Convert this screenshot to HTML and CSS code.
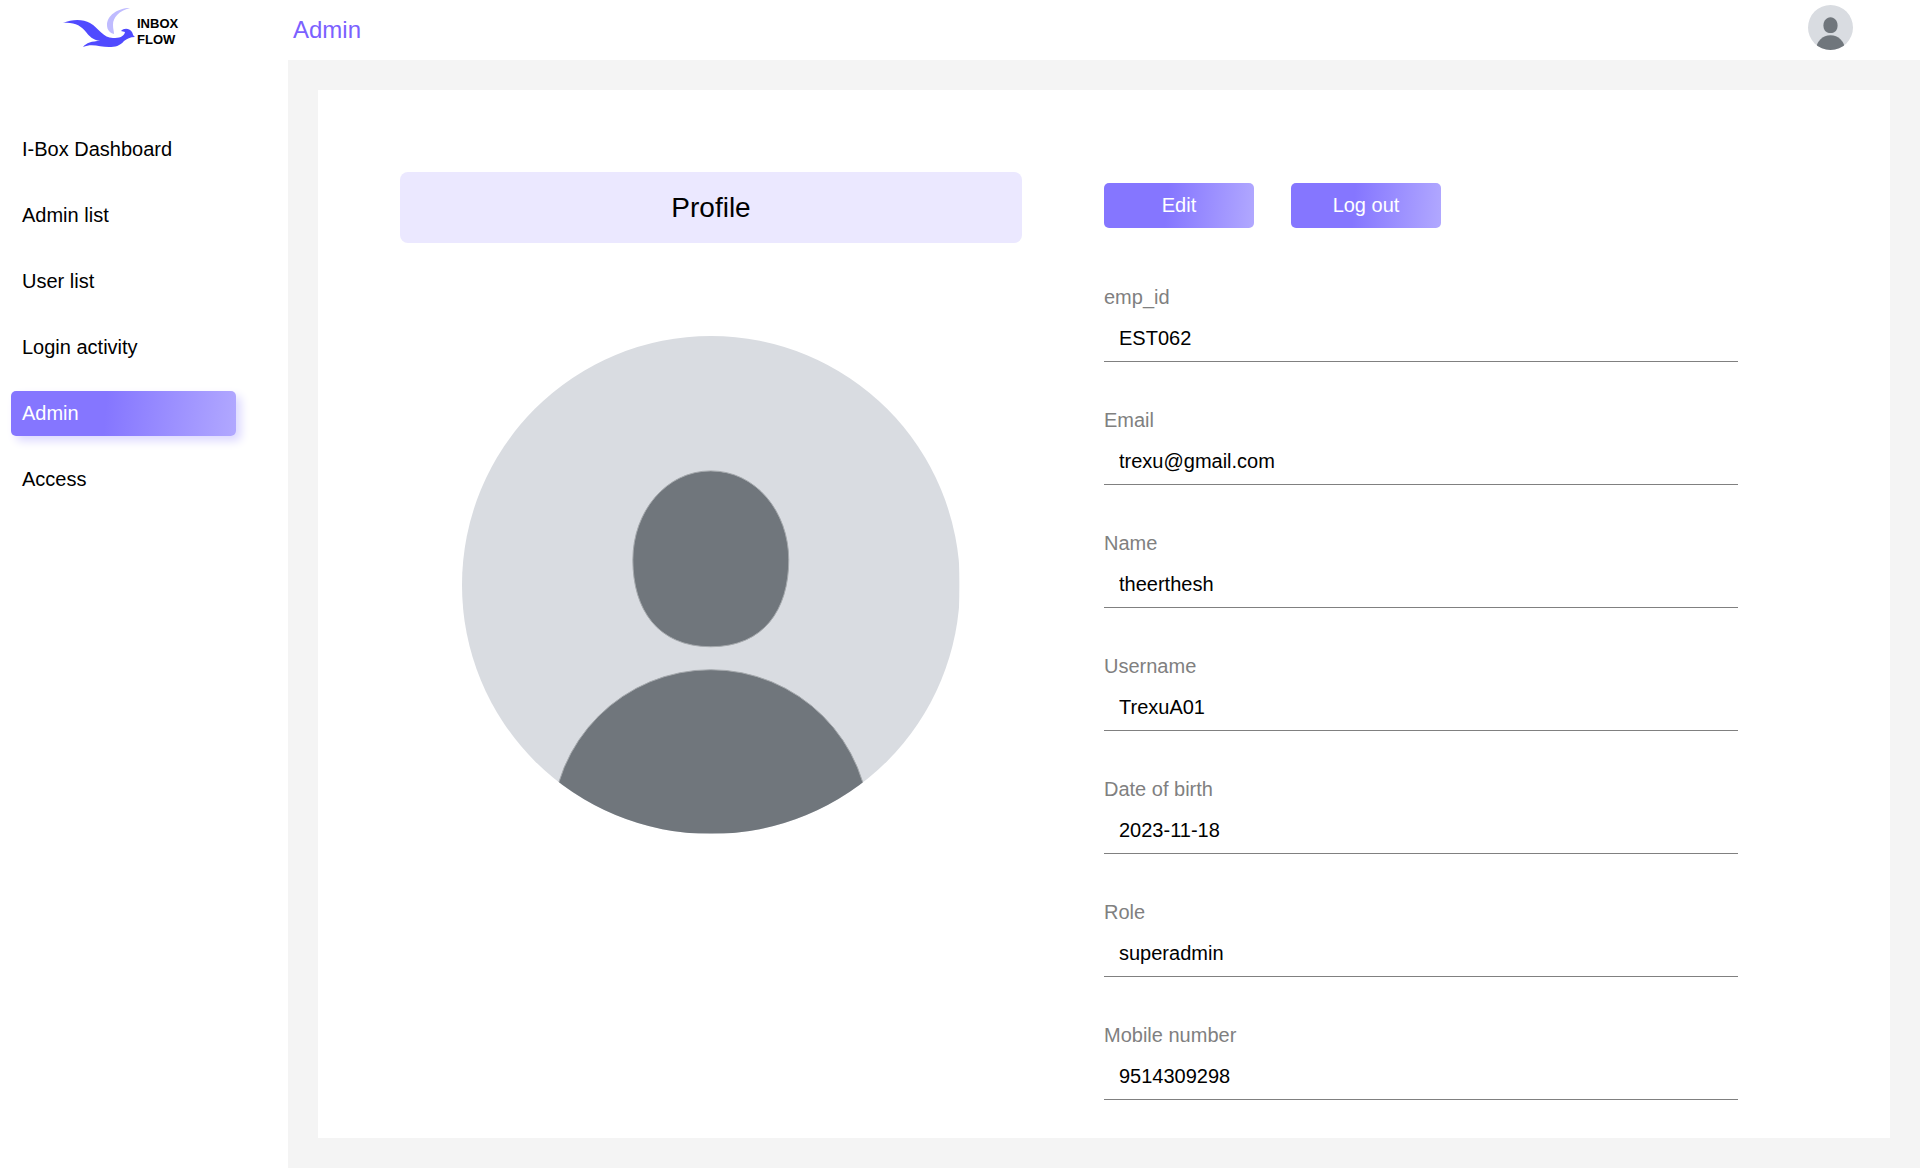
FILE: index.html
```html
<!DOCTYPE html>
<html lang="en">
<head>
<meta charset="utf-8">
<meta name="viewport" content="width=device-width, initial-scale=1">
<title>Admin - Inbox Flow</title>
<link rel="stylesheet" href="styles.css">
</head>
<body>
<svg class="defs" aria-hidden="true">
  <symbol id="person" viewBox="0 0 498 498">
    <rect width="498" height="498" fill="#d9dce1"/>
    <path d="M249 135C294 135 327 176 327 224C327 274 302 311 249 311C196 311 171 274 171 224C171 176 204 135 249 135Z" fill="#70767c" stroke="#a5a9ad" stroke-width="1"/>
    <circle cx="249" cy="493" r="159" fill="#70767c" stroke="#a5a9ad" stroke-width="1"/>
  </symbol>
</svg>
<div class="app">
  <aside class="sidebar">
    <a class="logo" href="#" aria-label="Inbox Flow">
      <svg class="logo-mark" viewBox="0 0 72 44" aria-hidden="true">
        <path d="M67 4C54 4 44 12 44 21C44 26 47 29 51 30C51 27 50 25 50 21C50 13 56 7 67 4Z" fill="#bfbbff"/>
        <path d="M0 19C9 15 20 15 27 19C37 25 40 34 50 34C56 34 61 33 62 28L58 27C61 24 66 24 69 28C70 30 70 32 72 33C67 33 64 35 61 37C57 42 52 43 46 43C37 43 29 39 20 43C23 39 29 37 37 37C30 36 26 32 23 28C18 22 12 18 0 19Z" fill="#504aff"/>
      </svg>
      <span class="logo-text">INBOX<br>FLOW</span>
    </a>
    <nav class="menu">
      <a href="#">I-Box Dashboard</a>
      <a href="#">Admin list</a>
      <a href="#">User list</a>
      <a href="#">Login activity</a>
      <a class="active" href="#" aria-current="page">Admin</a>
      <a href="#">Access</a>
    </nav>
  </aside>
  <div class="page">
    <header class="topbar">
      <h1>Admin</h1>
      <svg class="avatar avatar-small" role="img" aria-label="Account"><use href="#person"/></svg>
    </header>
    <main class="content">
      <div class="card">
        <section class="profile">
          <h2>Profile</h2>
          <svg class="avatar avatar-large" viewBox="0 0 498 498" role="img" aria-label="Profile picture"><use href="#person"/></svg>
        </section>
        <form class="details">
          <div class="actions">
            <button type="button">Edit</button>
            <button type="button">Log out</button>
          </div>
          <div class="field"><label for="emp">emp_id</label><input id="emp" type="text" value="EST062" readonly></div>
          <div class="field"><label for="email">Email</label><input id="email" type="text" value="trexu@gmail.com" readonly></div>
          <div class="field"><label for="name">Name</label><input id="name" type="text" value="theerthesh" readonly></div>
          <div class="field"><label for="user">Username</label><input id="user" type="text" value="TrexuA01" readonly></div>
          <div class="field"><label for="dob">Date of birth</label><input id="dob" type="text" value="2023-11-18" readonly></div>
          <div class="field"><label for="role">Role</label><input id="role" type="text" value="superadmin" readonly></div>
          <div class="field"><label for="mobile">Mobile number</label><input id="mobile" type="text" value="9514309298" readonly></div>
        </form>
      </div>
    </main>
  </div>
</div>
</body>
</html>
```
FILE: styles.css
```css
* {
  box-sizing: border-box;
}

body {
  margin: 0;
  background: #fff;
  color: #000;
  font-family: "Liberation Sans", Arial, sans-serif;
  font-size: 20px;
  line-height: 24px;
}

.defs {
  display: none;
}

.app {
  display: grid;
  grid-template-columns: 15% 1fr;
  min-height: 100vh;
}

.logo {
  display: flex;
  height: 60px;
  padding: 4px 0 0 63px;
  color: #000;
  text-decoration: none;
}

.logo-mark {
  width: 72px;
  height: 44px;
}

.logo-text {
  padding: 12px 0 0 2px;
  font-size: 13px;
  font-weight: bold;
  line-height: 16px;
}

.menu {
  display: flex;
  flex-direction: column;
  gap: 21px;
  width: 225px;
  margin: 67px 0 0 11px;
}

.menu a {
  padding: 0 11px;
  border-radius: 5px;
  color: #000;
  line-height: 45px;
  text-decoration: none;
}

.menu .active,
.actions button {
  background: linear-gradient(95deg, #8576ff 42%, #b1a8ff);
  color: #fff;
}

.menu .active {
  box-shadow: 5px 5px 10px #dcd8ff;
}

.page {
  display: flex;
  flex-direction: column;
}

.topbar {
  display: flex;
  align-items: center;
  justify-content: space-between;
  height: 60px;
  padding: 0 67px 0 5px;
}

h1 {
  margin: 0;
  color: #7b61ff;
  font-size: 24px;
  font-weight: normal;
}

.avatar {
  display: block;
  border-radius: 50%;
}

.avatar-small {
  width: 45px;
  height: 45px;
  margin-bottom: 5px;
}

.avatar-large {
  width: 80%;
  height: auto;
}

.content {
  flex: 1;
  padding: 30px;
  background: #f4f4f4;
}

.card {
  display: grid;
  grid-template-columns: 622fr 634fr;
  gap: 82px;
  padding: 82px 152px 38px 82px;
  background: #fff;
}

.profile {
  display: flex;
  flex-direction: column;
  align-items: center;
  gap: 93px;
}

h2 {
  width: 100%;
  margin: 0;
  border-radius: 8px;
  background: #ebe8ff;
  font-size: 28px;
  font-weight: normal;
  line-height: 71px;
  text-align: center;
}

.details {
  display: flex;
  flex-direction: column;
  gap: 41px;
  padding-top: 11px;
}

.actions {
  display: flex;
  gap: 37px;
  margin-bottom: 11px;
}

.actions button {
  width: 150px;
  height: 45px;
  padding: 0 0 2px;
  border: 0;
  border-radius: 5px;
  font: inherit;
}

.field {
  display: flex;
  flex-direction: column;
}

.field label {
  color: #808080;
  line-height: 34px;
}

.field input {
  width: 100%;
  height: 48px;
  padding: 1px 15px 0;
  border: 0;
  border-bottom: 1px solid #808080;
  background: none;
  color: #000;
  font: inherit;
  outline: 0;
}
```
